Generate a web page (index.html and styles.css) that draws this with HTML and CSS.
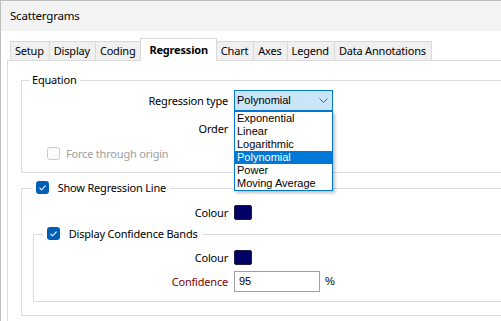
FILE: index.html
```html
<!DOCTYPE html>
<html lang="en">
<head>
    <meta charset="UTF-8">
    <meta name="viewport" content="width=device-width, initial-scale=1.0">
    <title>Scattergrams</title>
    <link rel="stylesheet" href="styles.css">
</head>
<body>
    <div class="window">
        <div class="titlebar">Scattergrams</div>
        <div class="main">
            <div class="tabs">
                <div class="tab">Setup</div>
                <div class="tab">Display</div>
                <div class="tab">Coding</div>
                <div class="tab active">Regression</div>
                <div class="tab">Chart</div>
                <div class="tab">Axes</div>
                <div class="tab">Legend</div>
                <div class="tab">Data Annotations</div>
            </div>
            <div class="panel">
                <fieldset class="group equation">
                    <legend class="legend-text">Equation</legend>
                    <div class="row">
                        <span class="label">Regression type</span>
                        <div class="combo-wrap">
                            <div class="combo open">
                                <span>Polynomial</span>
                                <svg class="chevron" width="9" height="5" viewBox="0 0 9 5">
                                    <polyline points="0.5,0.5 4.5,4.5 8.5,0.5" fill="none" stroke="#606060" stroke-width="1"/>
                                </svg>
                            </div>
                            <ul class="dropdown">
                                <li>Exponential</li>
                                <li>Linear</li>
                                <li>Logarithmic</li>
                                <li class="selected">Polynomial</li>
                                <li>Power</li>
                                <li>Moving Average</li>
                            </ul>
                        </div>
                    </div>
                    <div class="row order-row">
                        <span class="label">Order</span>
                        <div class="combo"></div>
                    </div>
                    <div class="row origin-row">
                        <span class="box disabled"></span>
                        <span class="muted">Force through origin</span>
                    </div>
                </fieldset>

                <fieldset class="group line">
                    <legend class="legend-check outer">
                        <span class="box checked">
                            <svg width="13" height="13" viewBox="0 0 13 13"><polyline points="3.5,6.8 5.6,8.8 9.6,4.6" fill="none" stroke="#fff" stroke-width="1.1"/></svg>
                        </span>
                        <span>Show Regression Line</span>
                    </legend>
                    <div class="row colour-row">
                        <span class="label">Colour</span>
                        <span class="swatch"></span>
                    </div>

                    <fieldset class="group bands">
                        <legend class="legend-check inner">
                            <span class="box checked">
                                <svg width="13" height="13" viewBox="0 0 13 13"><polyline points="3.5,6.8 5.6,8.8 9.6,4.6" fill="none" stroke="#fff" stroke-width="1.1"/></svg>
                            </span>
                            <span>Display Confidence Bands</span>
                        </legend>
                        <div class="row colour-row2">
                            <span class="label">Colour</span>
                            <span class="swatch"></span>
                        </div>
                        <div class="row conf-row">
                            <span class="label required">Confidence</span>
                            <input class="field" type="text" value="95">
                            <span class="unit">%</span>
                        </div>
                    </fieldset>
                </fieldset>
            </div>
        </div>
    </div>
</body>
</html>
```

FILE: styles.css
```css
html, body {
    margin: 0;
    height: 100%;
    overflow: hidden;
    background: #fff;
}
body {
    font-family: "Noto Sans", Arial, sans-serif;
    font-size: 11px;
    letter-spacing: -0.2px;
    color: #000;
}
.window {
    height: 100%;
    border-top: 1px solid #bdbdbd;
    border-left: 1px solid #bdbdbd;
    box-sizing: border-box;
}
.titlebar {
    height: 30px;
    line-height: 30px;
    padding-left: 9px;
    background: #f3f3f3;
    font-size: 11.5px;
}
.main {
    padding: 7px 0 0 6px;
}
.tabs {
    display: flex;
    align-items: flex-end;
    height: 22px;
    margin-left: 3px;
    position: relative;
    z-index: 1;
}
.tab {
    height: 19px;
    line-height: 18px;
    padding: 0 5px 0 4px;
    background: #f0f0f0;
    border: 1px solid #d9d9d9;
    border-bottom: none;
    box-sizing: border-box;
    margin-right: -1px;
    white-space: nowrap;
}
.tab.active {
    height: 23px;
    line-height: 22px;
    margin-bottom: -1px;
    padding: 0 8px;
    background: #fff;
    font-weight: bold;
    position: relative;
    z-index: 2;
}
.panel {
    width: 600px;
    height: 300px;
    border-top: 1px solid #d9d9d9;
    border-left: 1px solid #d9d9d9;
}
.group {
    margin: 0;
    padding: 0;
    border: 1px solid #dcdcdc;
    min-inline-size: 0;
}
.group legend {
    line-height: 16px;
    padding: 0 3px;
}
.equation {
    margin: 11px 0 0 13px;
    padding: 2px 0 9px 0;
}
.legend-text {
    margin-left: 7px;
}
.row {
    display: flex;
    align-items: center;
    height: 20px;
}
.label {
    width: 206px;
    margin-right: 6px;
    text-align: right;
    white-space: nowrap;
}
.bands .label {
    width: 194px;
}
.required {
    color: #800000;
}
.order-row {
    margin-top: 8px;
}
.origin-row {
    margin-top: 5px;
    padding-left: 25px;
}
.muted {
    color: #a0a0a0;
}
.combo-wrap {
    position: relative;
}
.combo {
    display: flex;
    align-items: center;
    justify-content: space-between;
    width: 99px;
    height: 21px;
    box-sizing: border-box;
    padding: 0 4px 0 2px;
    border: 1px solid #b8b8b8;
    background: #fff;
    font-family: "Liberation Sans", Arial, sans-serif;
    font-size: 11px;
    letter-spacing: 0;
}
.combo.open {
    border-color: #0078d7;
    background: #cce4f7;
}
.dropdown {
    position: absolute;
    top: 100%;
    left: 0;
    width: 99px;
    box-sizing: border-box;
    margin: 0;
    padding: 0;
    list-style: none;
    background: #fff;
    border: 1px solid #0078d7;
    box-shadow: 2px 2px 3px rgba(0, 0, 0, 0.25);
    font-family: "Liberation Sans", Arial, sans-serif;
    font-size: 11px;
    letter-spacing: 0;
    z-index: 5;
}
.dropdown li {
    height: 13px;
    line-height: 13px;
    padding-left: 2px;
    white-space: nowrap;
}
.dropdown li.selected {
    background: #0078d7;
    color: #fff;
}
.box {
    display: inline-flex;
    width: 13px;
    height: 13px;
    box-sizing: border-box;
    border-radius: 3px;
    margin-right: 6px;
    flex: none;
}
.box.disabled {
    border: 1px solid #c9c9c9;
    background: #fcfcfc;
}
.box.checked {
    background: #005fb8;
}
.legend-check span:last-child {
    vertical-align: top;
}
.legend-check .box {
    vertical-align: top;
    margin-top: 1px;
}
.line {
    margin: 7px 0 0 13px;
    padding: 6px 0 0 0;
}
.legend-check.outer {
    margin-left: 10px;
    padding: 0 4px;
}
.legend-check.inner {
    margin-left: 9px;
    padding: 0 4px;
}
.swatch {
    width: 18px;
    height: 15px;
    box-sizing: border-box;
    background: #000066;
    border: 1px solid #1c1c40;
    border-radius: 2px;
}
.bands {
    margin: 4px 0 13px 11px;
    padding: 5px 0 10px 0;
}
.conf-row {
    margin-top: 4px;
}
.field {
    width: 86px;
    height: 21px;
    box-sizing: border-box;
    margin: 0;
    padding: 0 4px;
    border: 1px solid #a0a0a0;
    font-family: "Liberation Sans", Arial, sans-serif;
    font-size: 11px;
    letter-spacing: 0;
    color: #000;
}
.unit {
    margin-left: 5px;
    font-family: "Liberation Sans", Arial, sans-serif;
    font-size: 11px;
}
```
